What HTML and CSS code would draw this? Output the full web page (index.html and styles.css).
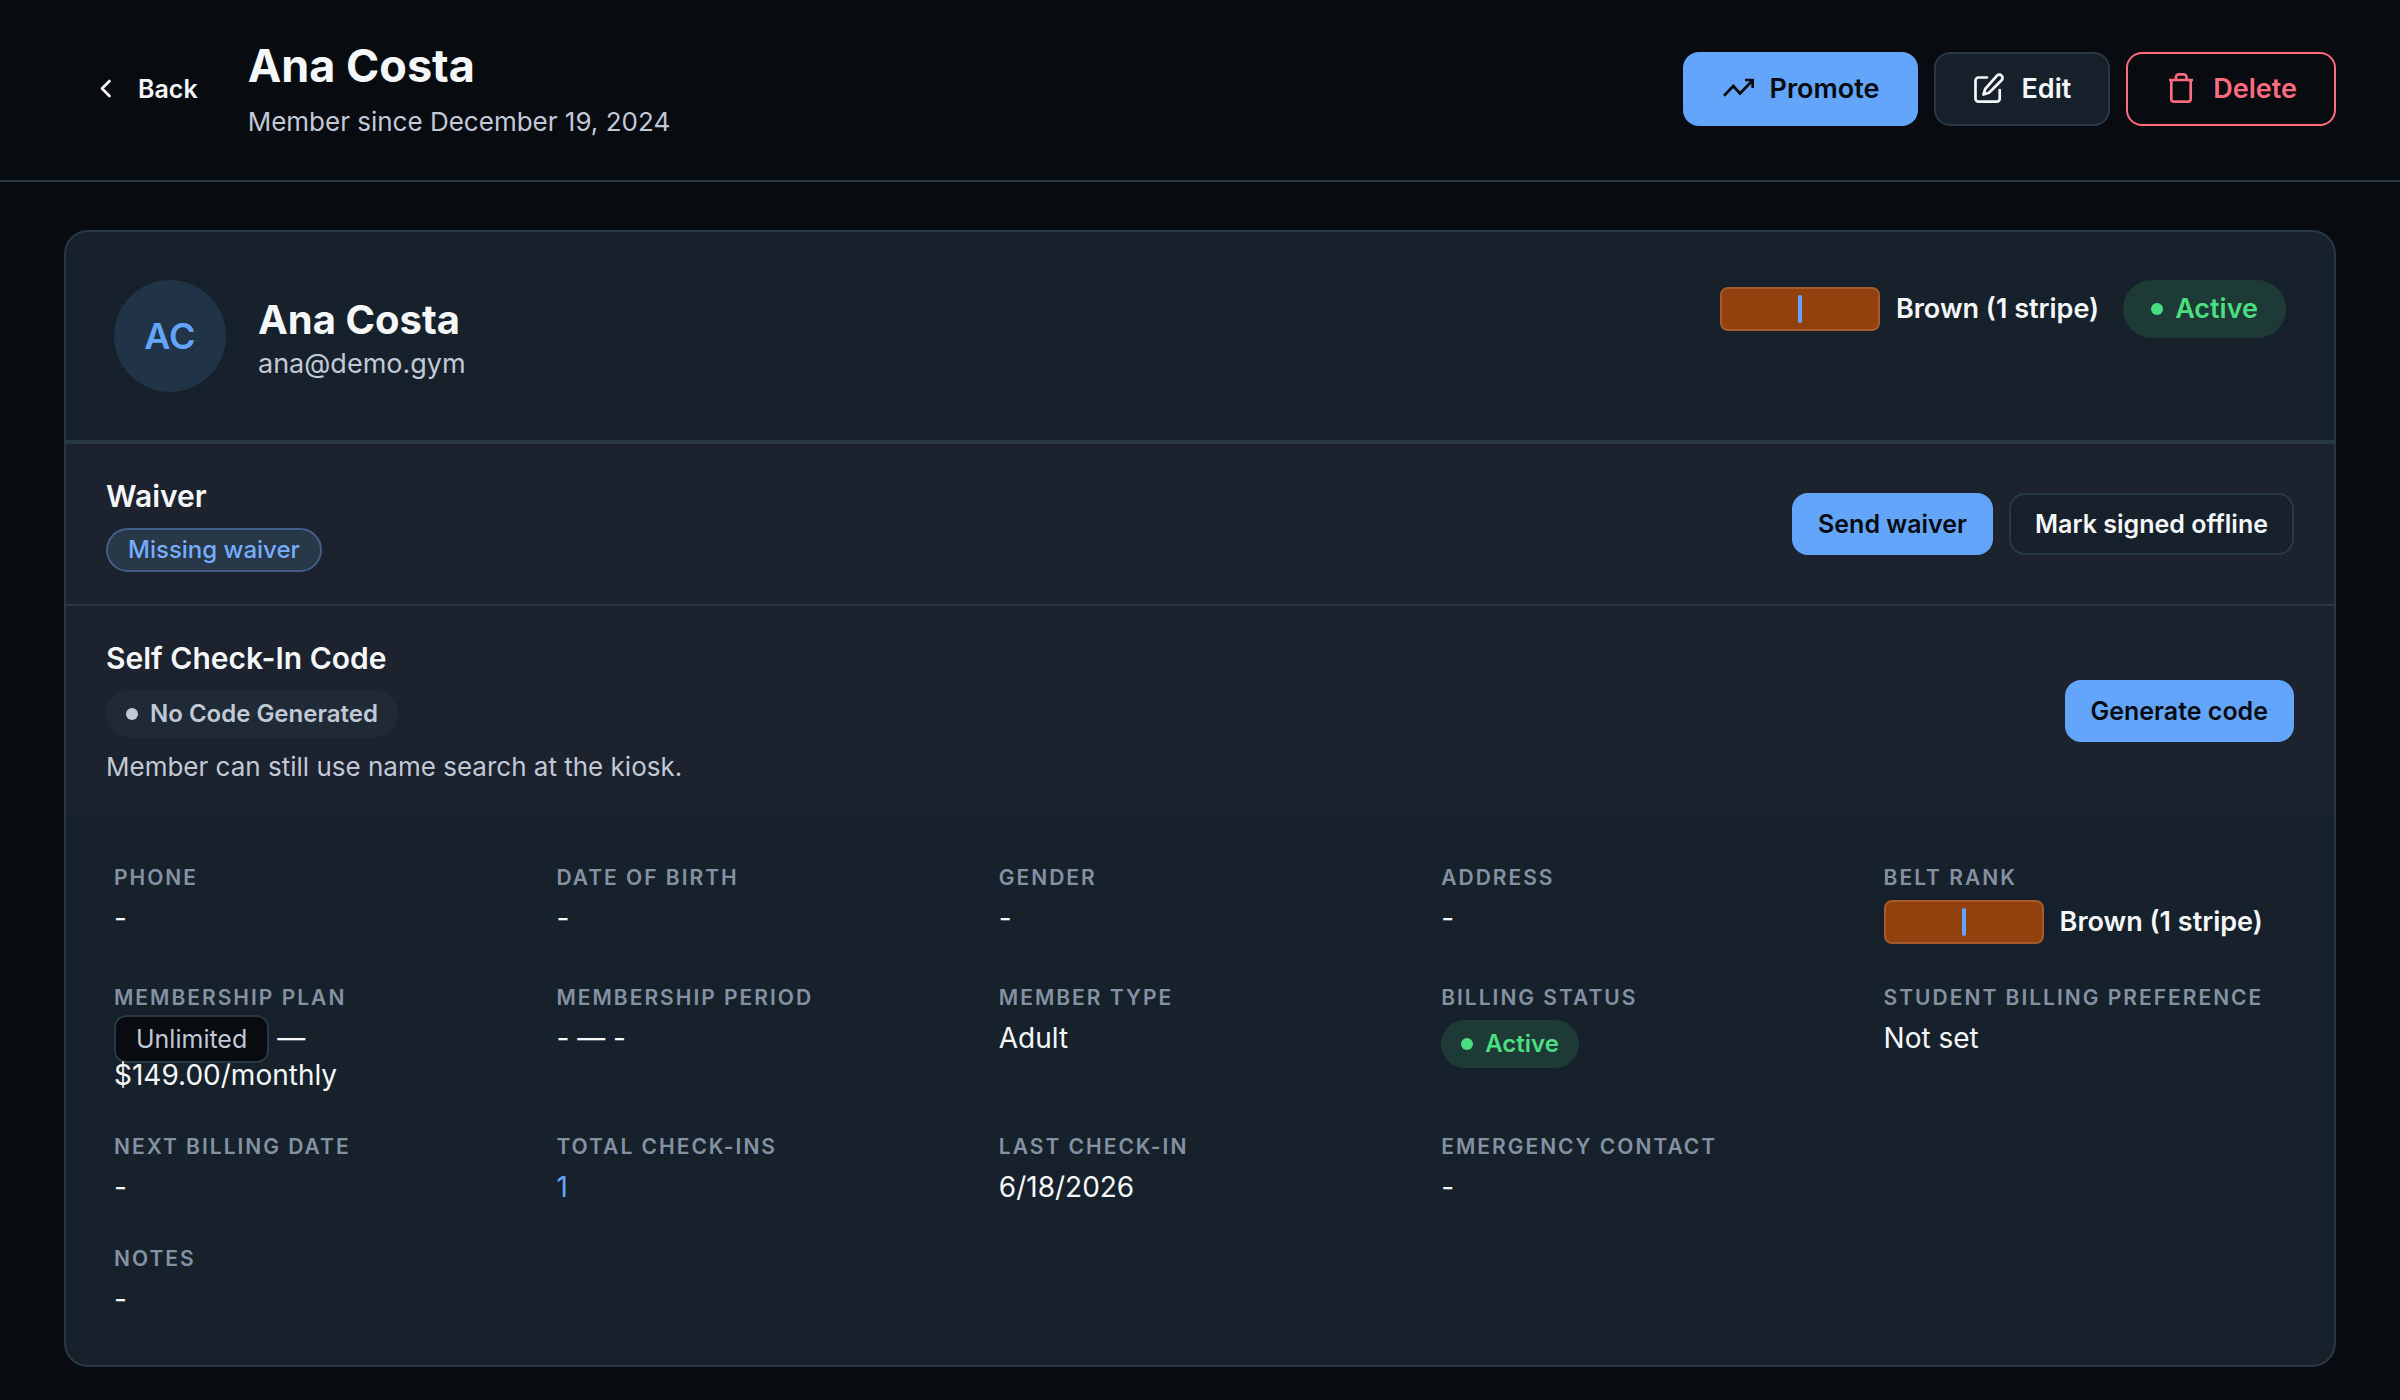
FILE: index.html
```html
<!DOCTYPE html>
<html lang="en">
<head>
<meta charset="utf-8">
<title>Ana Costa</title>
<link rel="stylesheet" href="styles.css">
</head>
<body>
<header class="topbar">
  <button class="back" type="button">
    <svg class="back-icon" viewBox="0 0 24 24" aria-hidden="true"><path d="M15.500 4 8 11.500l7.500 7.500"/></svg>
    Back
  </button>
  <div class="heading">
    <h1 class="page-title">Ana Costa</h1>
    <p class="subtitle">Member since December 19, 2024</p>
  </div>
  <div class="actions">
    <button class="btn primary" type="button">
      <svg class="icon sharp" viewBox="0 0 32 32" aria-hidden="true"><path d="M2 22.700 11.300 13l6.700 7.500L30.500 7.500M23 7h7.700v8"/></svg>
      Promote
    </button>
    <button class="btn" type="button">
      <svg class="icon" viewBox="0 0 32 32" aria-hidden="true"><path d="M14 4.500H5.500a3 3 0 0 0-3 3v18.200a3 3 0 0 0 3 3h18.200a3 3 0 0 0 3-3V17M24 2.600a3.200 3.200 0 0 1 4.600 4.600L16 19.800l-5.500 1.700 1.700-5.500Z"/></svg>
      Edit
    </button>
    <button class="btn danger" type="button">
      <svg class="icon sharp" viewBox="0 0 32 32" aria-hidden="true"><path d="M4 7h24M25.700 7v19a2.700 2.700 0 0 1-2.700 2.700H9A2.700 2.700 0 0 1 6.300 26V7M11 7V4a2.700 2.700 0 0 1 2.700-2.700h5A2.700 2.700 0 0 1 21.400 4v3"/></svg>
      Delete
    </button>
  </div>
</header>
<main class="content">
  <article class="card">
    <section class="profile">
      <div class="avatar">AC</div>
      <div class="identity">
        <h2 class="name">Ana Costa</h2>
        <p class="email">ana@demo.gym</p>
      </div>
      <div class="standing">
        <div class="rank"><span class="belt"><span class="stripe"></span></span>Brown (1 stripe)</div>
        <span class="badge large active">Active</span>
      </div>
    </section>
    <section class="panel">
      <div class="panel-text">
        <h3 class="panel-title">Waiver</h3>
        <span class="pill">Missing waiver</span>
      </div>
      <button class="btn small primary" type="button">Send waiver</button>
      <button class="btn small" type="button">Mark signed offline</button>
    </section>
    <section class="panel">
      <div class="panel-text">
        <h3 class="panel-title">Self Check-In Code</h3>
        <span class="badge neutral">No Code Generated</span>
        <p class="hint">Member can still use name search at the kiosk.</p>
      </div>
      <button class="btn small primary" type="button">Generate code</button>
    </section>
    <dl class="details">
      <div class="field"><dt>Phone</dt><dd>-</dd></div>
      <div class="field"><dt>Date of Birth</dt><dd>-</dd></div>
      <div class="field"><dt>Gender</dt><dd>-</dd></div>
      <div class="field"><dt>Address</dt><dd>-</dd></div>
      <div class="field"><dt>Belt Rank</dt><dd class="rank"><span class="belt"><span class="stripe"></span></span>Brown (1 stripe)</dd></div>
      <div class="field"><dt>Membership Plan</dt><dd><span class="plan">Unlimited</span> — <br>$149.00/monthly</dd></div>
      <div class="field"><dt>Membership Period</dt><dd>- — -</dd></div>
      <div class="field"><dt>Member Type</dt><dd>Adult</dd></div>
      <div class="field"><dt>Billing Status</dt><dd class="status"><span class="badge active">Active</span></dd></div>
      <div class="field"><dt>Student Billing Preference</dt><dd>Not set</dd></div>
      <div class="field"><dt>Next Billing Date</dt><dd>-</dd></div>
      <div class="field"><dt>Total Check-Ins</dt><dd><a class="count" href="#checkins">1</a></dd></div>
      <div class="field"><dt>Last Check-In</dt><dd>6/18/2026</dd></div>
      <div class="field"><dt>Emergency Contact</dt><dd>-</dd></div>
      <div class="field notes"><dt>Notes</dt><dd>-</dd></div>
    </dl>
  </article>
</main>
</body>
</html>
```
FILE: styles.css
```css
:root {
  --bg: #080b10;
  --surface: #17212b;
  --raised: #1c222e;
  --line: #2a3744;
  --text: #f5f7fa;
  --soft: #c1c9d6;
  --muted: #8491a3;
  --blue: #62a5fb;
  --red: #ff6b7f;
  --green: #4ade80;
}

* {
  box-sizing: border-box;
}

body,
h1,
h2,
h3,
p,
dl,
dd {
  margin: 0;
}

body {
  background: var(--bg);
  color: var(--text);
  font: 28px/36px Inter, sans-serif;
}

.topbar {
  display: flex;
  align-items: center;
  padding: 38px 64px 40px;
  border-bottom: 2px solid var(--line);
}

.back {
  display: flex;
  align-items: center;
  gap: 20px;
  margin-right: 16px;
  padding: 16px 34px 16px 30px;
  border: 0;
  background: none;
  color: var(--text);
  font: 600 25px/32px Inter, sans-serif;
}

.back-icon,
.icon {
  fill: none;
  stroke: currentColor;
  stroke-width: 2.700;
  stroke-linecap: round;
  stroke-linejoin: round;
}

.sharp {
  stroke-linecap: butt;
  stroke-linejoin: miter;
}

.back-icon {
  width: 24px;
  height: 24px;
}

.heading {
  flex: 1;
}

.page-title,
.name,
.panel-title {
  font-weight: 700;
}

.page-title {
  font-size: 45px;
  line-height: 56px;
}

.subtitle {
  margin-top: 10px;
  color: var(--soft);
  font-size: 26px;
}

.actions {
  display: flex;
  gap: 16px;
}

.btn {
  display: flex;
  align-items: center;
  gap: 16px;
  height: 74px;
  padding: 0 37px;
  border: 2px solid var(--line);
  border-radius: 16px;
  background: var(--surface);
  color: var(--text);
  font: 600 27px/36px Inter, sans-serif;
}

.icon {
  width: 32px;
  height: 32px;
}

.primary {
  border-color: var(--blue);
  background: var(--blue);
  color: var(--bg);
}

.danger {
  border-color: var(--red);
  background: none;
  color: var(--red);
}

.small {
  height: 62px;
  padding: 0 24px;
  font-size: 25px;
}

.content {
  padding: 48px 64px 34px;
}

.card {
  overflow: hidden;
  border: 2px solid var(--line);
  border-radius: 24px;
  background: var(--surface);
}

.profile {
  display: flex;
  align-items: center;
  gap: 32px;
  padding: 48px;
  border-bottom: 2px solid var(--line);
}

.avatar {
  display: grid;
  place-items: center;
  width: 112px;
  height: 112px;
  border-radius: 50%;
  background: #213347;
  color: var(--blue);
  font-size: 36px;
  font-weight: 600;
}

.identity {
  flex: 1;
  padding-top: 6px;
}

.name {
  font-size: 40px;
  line-height: 48px;
}

.email {
  margin-top: 2px;
  color: var(--soft);
  font-size: 27px;
}

.standing {
  display: flex;
  align-self: flex-start;
  align-items: center;
  gap: 24px;
}

.rank {
  display: flex;
  align-items: center;
  gap: 16px;
  font-size: 27px;
  font-weight: 600;
}

.belt {
  display: grid;
  place-items: center;
  width: 160px;
  height: 44px;
  border: 2px solid #a55a2d;
  border-radius: 8px;
  background: #92400e;
}

.stripe {
  width: 4px;
  height: 28px;
  border-radius: 2px;
  background: var(--blue);
}

.badge {
  display: inline-flex;
  align-items: center;
  gap: 12px;
  height: 48px;
  padding: 0 20px;
  border-radius: 24px;
  font-size: 24px;
  font-weight: 600;
}

.badge::before {
  content: "";
  width: 12px;
  height: 12px;
  border-radius: 50%;
  background: currentColor;
}

.large {
  height: 58px;
  padding: 0 28px;
  border-radius: 29px;
  font-size: 27px;
}

.active {
  background: #1e3a36;
  color: var(--green);
}

.neutral {
  background: #1f2a36;
  color: var(--soft);
}

.panel {
  display: flex;
  align-items: center;
  gap: 16px;
  padding: 32px 40px;
  border-top: 2px solid var(--line);
  background: var(--raised);
}

.panel-text {
  display: flex;
  flex: 1;
  flex-direction: column;
  align-items: flex-start;
}

.panel-title {
  margin-bottom: 12px;
  font-size: 30px;
  font-weight: 600;
  line-height: 40px;
}

.pill {
  padding: 2px 20px;
  border: 2px solid #435f87;
  border-radius: 22px;
  background: #283848;
  color: #75aefc;
  font-size: 24px;
  font-weight: 500;
}

.hint {
  margin-top: 12px;
  color: var(--soft);
  font-size: 26px;
  line-height: 34px;
}

.details {
  display: grid;
  grid-template-columns: repeat(5, 1fr);
  gap: 40px;
  padding: 48px;
}

.notes {
  grid-column: 1 / -1;
}

dt {
  margin-bottom: 8px;
  color: var(--muted);
  font-size: 21px;
  font-weight: 600;
  line-height: 28px;
  letter-spacing: 2px;
  text-transform: uppercase;
  white-space: nowrap;
}

.status {
  display: flex;
}

.plan {
  padding: 7px 20px;
  border: 2px solid var(--line);
  border-radius: 12px;
  background: var(--bg);
  color: var(--soft);
  font-size: 25px;
}

.count {
  color: var(--blue);
  text-decoration: none;
}
```
